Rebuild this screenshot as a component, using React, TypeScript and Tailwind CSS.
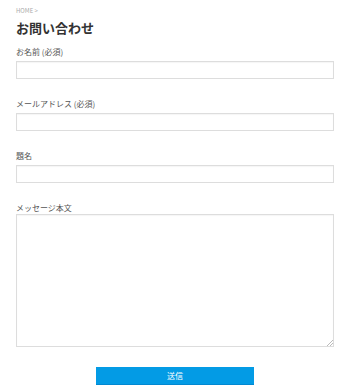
const FONT = "font-['Noto_Sans_CJK_JP','Noto_Sans',sans-serif]"

function Field({ label, children, mb = 'mb-[3px]' }: { label: string; children: React.ReactNode; mb?: string }) {
  return (
    <div>
      <label className={`block h-[12px] text-[8px] leading-[12px] text-[#555] ${mb}`}>{label}</label>
      {children}
    </div>
  )
}

const inputCls =
  'block w-full h-[18px] border border-[#dddddd] bg-white shadow-[inset_0_1px_1px_rgba(0,0,0,0.04)] outline-none'

export default function App() {
  return (
    <div className={`w-[350px] h-[392px] bg-white px-4 ${FONT}`}>
      <div className="pt-[8px] h-[14px] text-[6px] leading-[6px] text-[#aaaaaa]">HOME &gt;</div>
      <h1 className="mt-[4px] h-[20px] text-[13px] leading-[20px] font-bold text-[#333]">お問い合わせ</h1>
      <form className="mt-[8px]">
        <Field label="お名前 (必須)">
          <input className={inputCls} />
        </Field>
        <div className="h-[19px]" />
        <Field label="メールアドレス (必須)">
          <input className={inputCls} />
        </Field>
        <div className="h-[19px]" />
        <Field label="題名">
          <input className={inputCls} />
        </Field>
        <div className="h-[19px]" />
        <Field label="メッセージ本文" mb="mb-[0px]">
          <div className="relative">
            <textarea className="block w-full h-[133px] border border-[#dddddd] bg-white shadow-[inset_0_1px_1px_rgba(0,0,0,0.04)] outline-none resize-none" />
            {/* resize grip */}
            <svg className="absolute right-[1px] bottom-[1px]" width="6" height="6" viewBox="0 0 6 6">
              <path d="M6 0L0 6M6 3L3 6" stroke="#bbbbbb" strokeWidth="1" />
            </svg>
          </div>
        </Field>
        <div className="mt-[20px] flex justify-center">
          <button
            type="button"
            className="w-[158px] h-[18px] bg-[#039be5] text-white text-[8px] leading-[18px] border-b border-[#0288d1]"
          >
            送信
          </button>
        </div>
      </form>
    </div>
  )
}
